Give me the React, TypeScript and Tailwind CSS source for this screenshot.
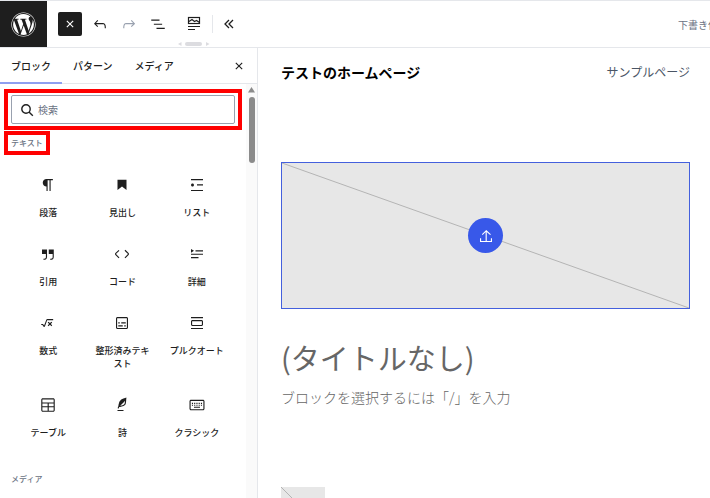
import { useState } from 'react';
import type { ReactNode } from 'react';
import { FaWordpress } from 'react-icons/fa';

const paths = {
  close:
    'M12 13.06l3.712 3.713 1.061-1.06L13.061 12l3.712-3.712-1.06-1.06L12 10.938 8.288 7.227l-1.061 1.06L10.939 12l-3.712 3.712 1.06 1.061L12 13.061z',
  undo: 'M18.3 11.7c-.6-.6-1.4-.9-2.3-.9H6.7l2.9-3.3-1.1-1-4.5 5L8.5 16l1-1-2.7-2.7H16c.5 0 .9.2 1.3.5 1 1 1 3.4 1 4.5v.3h1.5v-.2c0-1.5 0-4.3-1.5-5.7z',
  redo: 'M15.6 6.5l-1.1 1 2.9 3.3H8c-.9 0-1.7.3-2.3.9-1.4 1.5-1.4 4.2-1.4 5.6v.2h1.5v-.3c0-1.1 0-3.5 1-4.5.3-.3.7-.5 1.3-.5h9.2L14.5 15l1.1 1.1 4.6-4.6-4.6-5z',
  listView: 'M3 6h11v1.5H3V6Zm3.5 5.5h11V13h-11v-1.5ZM21 17H10v1.5h11V17Z',
  upload: 'M18.5 15v3.5H13V6.7l4.5 4.1 1-1.1-6.2-5.8-5.8 5.8 1 1.1 4-4v11.7h-6V15H4v5h16v-5z',
  paragraph:
    'm9.99609 14v-.2251l.00391.0001v6.225h1.5v-14.5h2.5v14.5h1.5v-14.5h3v-1.5h-8.50391c-2.76142 0-5 2.23858-5 5 0 2.7614 2.23858 5 5 5z',
  heading: 'M6 5V18.5911L12 13.8473L18 18.5911V5H6Z',
  list: 'M4 4v1.5h16V4H4zm8 8.5h8V11h-8v1.5zM4 20h16v-1.5H4V20zm4-8c0-1.1-.9-2-2-2s-2 .9-2 2 .9 2 2 2 2-.9 2-2z',
  quote:
    'M13 6v6h5.2v4c0 .8-.2 1.4-.5 1.7-.6.6-1.6.6-2.5.5h-.3v1.5h.5c1 0 2.3-.1 3.3-1 .6-.6 1-1.6 1-2.8V6H13zm-9 6h5.2v4c0 .8-.2 1.4-.5 1.7-.6.6-1.6.6-2.5.5h-.3v1.5h.5c1 0 2.3-.1 3.3-1 .6-.6 1-1.6 1-2.8V6H4v6z',
  code: 'M20.8 10.7l-4.3-4.3-1.1 1.1 4.3 4.3c.1.1.1.3 0 .4l-4.3 4.3 1.1 1.1 4.3-4.3c.7-.8.7-1.9 0-2.6zM4.2 11.8l4.3-4.3-1-1-4.3 4.3c-.7.7-.7 1.8 0 2.5l4.3 4.3 1.1-1.1-4.3-4.3c-.2-.1-.2-.3-.1-.4z',
  details: 'M4 16h10v1.5H4V16Zm0-4.5h16V13H4v-1.5ZM10 7h10v1.5H10V7ZM4 5.25l4 2.5-4 2.5v-5Z',
  math: 'M11.2 6.8c-.7 0-1.4.5-1.6 1.1l-2.8 7.5-1.2-1.8c-.1-.2-.4-.3-.6-.3H3v1.5h1.6l1.2 1.8c.6.9 1.9.7 2.2-.3l2.9-7.9s.1-.2.2-.2h7.8V6.7h-7.8Zm5.3 3.4-1.9 1.9-1.9-1.9-1.1 1.1 1.9 1.9-1.9 1.9 1.1 1.1 1.9-1.9 1.9 1.9 1.1-1.1-1.9-1.9 1.9-1.9-1.1-1.1Z',
  preformatted:
    'M18 4H6c-1.1 0-2 .9-2 2v12c0 1.1.9 2 2 2h12c1.1 0 2-.9 2-2V6c0-1.1-.9-2-2-2zm.5 14c0 .3-.2.5-.5.5H6c-.3 0-.5-.2-.5-.5V6c0-.3.2-.5.5-.5h12c.3 0 .5.2.5.5v12zM7 16.5h6V15H7v1.5zm4-4h6V11h-6v1.5zM9 11H7v1.5h2V11zm6 5.5h2V15h-2v1.5z',
  pullquote:
    'M18 8H6c-1.1 0-2 .9-2 2v4c0 1.1.9 2 2 2h12c1.1 0 2-.9 2-2v-4c0-1.1-.9-2-2-2zm.5 6c0 .3-.2.5-.5.5H6c-.3 0-.5-.2-.5-.5v-4c0-.3.2-.5.5-.5h12c.3 0 .5.2.5.5v4zM4 4v1.5h16V4H4zm0 16h16v-1.5H4V20z',
  table:
    'M19 3H5c-1.1 0-2 .9-2 2v14c0 1.1.9 2 2 2h14c1.1 0 2-.9 2-2V5c0-1.1-.9-2-2-2zM5 4.5h14c.3 0 .5.2.5.5v3.5h-15V5c0-.3.2-.5.5-.5zm8 5.5h6.5v3.5H13V10zm-1.5 3.5h-7V10h7v3.5zm-7 5.5v-4h7v4.5H5c-.3 0-.5-.2-.5-.5zm14.5.5h-6V15h6.5v4c0 .3-.2.5-.5.5z',
  verse:
    'M17.8 2l-.9.3c-.1 0-3.6 1-5.2 2.1C10 5.5 9.3 6.5 8.9 7.1c-.6.9-1.7 4.7-1.7 6.3l-.9 2.3c-.2.4 0 .8.4 1 .1 0 .2.1.3.1.3 0 .6-.2.7-.5l.6-1.5c.3 0 .7-.1 1.2-.2.7-.1 1.4-.3 2.2-.5.8-.2 1.6-.5 2.4-.8.7-.3 1.4-.7 1.9-1.2s.8-1.2 1-1.9c.2-.7.3-1.6.4-2.4.1-.8.1-1.7.2-2.5 0-.8.1-1.5.2-2.1V2zm-1.9 5.6c-.1.8-.2 1.5-.3 2.1-.2.6-.4 1-.6 1.3-.3.3-.8.6-1.4.9-.7.3-1.4.5-2.2.8-.6.2-1.3.3-1.8.4L15 7.5c.3-.3.6-.7 1-1.1 0 .4 0 .8-.1 1.2zM6 20h8v-1.5H6V20z',
  classic:
    'M20 5H4c-1.1 0-2 .9-2 2v10c0 1.1.9 2 2 2h16c1.1 0 2-.9 2-2V7c0-1.1-.9-2-2-2zm.5 12c0 .3-.2.5-.5.5H4c-.3 0-.5-.2-.5-.5V7c0-.3.2-.5.5-.5h16c.3 0 .5.2.5.5v10zM5.2 9h1.5v1.5H5.200zm3 0h1.5v1.5H8.200zm3 0h1.5v1.5h-1.500zm3 0h1.500v1.500h-1.500zm3 0h1.500v1.500h-1.500zM5.200 11.500h1.500V13H5.200zm3 0h1.500V13H8.200zm3 0h1.500V13h-1.500zm3 0h1.500V13h-1.500zm3 0h1.500V13h-1.500zM8 14.200h8v1.500H8z',
};

type IconName = keyof typeof paths;

function Icon({ name, className = 'size-[18px]' }: { name: IconName; className?: string }) {
  return (
    <svg viewBox="0 0 24 24" fill="currentColor" className={`shrink-0 ${className}`} aria-hidden="true">
      <path d={paths[name]} />
    </svg>
  );
}

const tabs = ['ブロック', 'パターン', 'メディア'];

const textBlocks: { icon: IconName; label: string }[] = [
  { icon: 'paragraph', label: '段落' },
  { icon: 'heading', label: '見出し' },
  { icon: 'list', label: 'リスト' },
  { icon: 'quote', label: '引用' },
  { icon: 'code', label: 'コード' },
  { icon: 'details', label: '詳細' },
  { icon: 'math', label: '数式' },
  { icon: 'preformatted', label: '整形済みテキスト' },
  { icon: 'pullquote', label: 'プルクオート' },
  { icon: 'table', label: 'テーブル' },
  { icon: 'verse', label: '詩' },
  { icon: 'classic', label: 'クラシック' },
];

function ToolButton({ label, className = '', children }: { label: string; className?: string; children: ReactNode }) {
  return (
    <button aria-label={label} className={`flex size-6 shrink-0 items-center justify-center ${className}`}>
      {children}
    </button>
  );
}

function Header() {
  return (
    <header className="relative flex h-12 shrink-0 items-center border-t border-b border-gray-200 bg-white">
      <a href="#" aria-label="WordPress" className="flex h-full w-[47px] shrink-0 items-center justify-center bg-[#1e1e1e] text-white">
        <FaWordpress className="size-[25px]" />
      </a>
      <div className="ml-[11px] flex items-center">
        <ToolButton label="ブロック挿入ツールを閉じる" className="rounded-xs bg-[#1e1e1e] text-white">
          <Icon name="close" />
        </ToolButton>
        <div className="ml-1.5 flex gap-[5px]">
          <ToolButton label="元に戻す">
            <Icon name="undo" />
          </ToolButton>
          <ToolButton label="やり直す" className="text-gray-400">
            <Icon name="redo" />
          </ToolButton>
          <ToolButton label="リスト表示">
            <Icon name="listView" />
          </ToolButton>
        </div>
        <ToolButton label="テンプレート" className="ml-3">
          <svg viewBox="0 0 18 18" className="size-[18px]" fill="none" stroke="currentColor" strokeWidth="1.2">
            <rect x="3.5" y="2.5" width="11" height="6" />
            <path d="M4 6.500l3-2 2.500 2 2-1 3 2M3 11.500h12M3 14.500h7" />
          </svg>
        </ToolButton>
        <div className="ml-1.5 h-[18px] w-px bg-gray-200" />
        <ToolButton label="ツールバーを隠す" className="ml-1">
          <svg viewBox="0 0 18 18" className="size-[18px]" fill="none" stroke="currentColor" strokeWidth="1.3">
            <path d="M9 5L5 9l4 4M13 5L9 9l4 4" />
          </svg>
        </ToolButton>
      </div>
      <button className="ml-auto w-8 shrink-0 overflow-hidden text-left text-[10px] whitespace-nowrap text-gray-500">下書き保存</button>

      {/* Horizontal scroll hint under the toolbar */}
      <svg viewBox="0 0 32 4" className="absolute bottom-px left-[178px] h-1 w-8" fill="#dcdce0" aria-hidden="true">
        <path d="M3.500 0v4L0 2zM28 0v4l3.500-2z" />
        <rect x="7" width="17" height="4" rx="2" />
      </svg>
    </header>
  );
}

function Sidebar() {
  const [activeTab, setActiveTab] = useState(tabs[0]);
  const [query, setQuery] = useState('');

  return (
    <aside className="flex w-[258px] shrink-0 flex-col border-r border-gray-200">
      <div className="flex h-9 shrink-0 items-center border-b border-gray-200">
        {tabs.map((tab) => (
          <button
            key={tab}
            onClick={() => setActiveTab(tab)}
            className={`-mb-px h-9 border-b-2 px-[11px] text-[10px] font-medium ${
              tab === activeTab ? 'border-[#8e9ff0]' : 'border-transparent'
            }`}
          >
            {tab}
          </button>
        ))}
        <ToolButton label="閉じる" className="mr-1.5 ml-auto">
          <Icon name="close" />
        </ToolButton>
      </div>

      <div className="flex min-h-0 flex-1">
        <div className="min-w-0 flex-1 overflow-hidden pt-[5px] pr-1 pl-1">
          <div className="border-4 border-[#ff0000] px-[3px] py-0.5">
            <label className="flex h-[29px] items-center gap-1 rounded-xs border border-gray-400 pl-2">
              <svg viewBox="0 0 14 14" className="size-3.5 shrink-0" fill="none" stroke="currentColor" strokeWidth="1.4" aria-hidden="true">
                <circle cx="6" cy="6" r="4.2" />
                <path d="M9 9l3.800 3.800" />
              </svg>
              <input
                type="text"
                aria-label="検索"
                placeholder="検索"
                value={query}
                onChange={(e) => setQuery(e.target.value)}
                className="w-full text-[10px] outline-none placeholder:text-gray-500"
              />
            </label>
          </div>
          <h2 className="mt-px w-fit border-4 border-[#ff0000] px-[3px] text-[8px] leading-4 font-medium text-gray-500">テキスト</h2>

          <div className="mt-[9px] mr-2 ml-[7px] grid grid-cols-3">
            {textBlocks
              .filter((block) => block.label.includes(query))
              .map((block) => (
                <button key={block.label} className="flex min-h-[69px] flex-col items-center gap-3 px-2.5 pt-3 pb-3.5">
                  <Icon name={block.icon} />
                  <span className="text-[9px] leading-[13px] font-medium">{block.label}</span>
                </button>
              ))}
          </div>
          <h2 className="mt-[18px] ml-[7px] text-[8px] leading-4 font-medium text-gray-500">メディア</h2>
        </div>

        {/* Scrollbar */}
        <div className="flex w-[11px] shrink-0 flex-col items-center gap-1 bg-[#fafafa] pt-[3px]" aria-hidden="true">
          <svg viewBox="0 0 7 6" className="h-1.5 w-[7px]" fill="#8b8b8b">
            <path d="M3.500 0L7 5.500H0z" />
          </svg>
          <div className="h-[66px] w-1.5 rounded-full bg-[#8b8b8b]" />
        </div>
      </div>
    </aside>
  );
}

function Canvas() {
  return (
    <main className="min-w-0 flex-1 overflow-hidden pr-5 pl-[23px]">
      <div className="flex h-12 items-center justify-between">
        <p className="text-sm font-bold text-black">テストのホームページ</p>
        <a href="#" className="text-xs text-gray-600">
          サンプルページ
        </a>
      </div>

      <div className="relative mt-[66px] flex h-[147px] items-center justify-center border border-[#4460dd] bg-[#e7e7e7]">
        <svg viewBox="0 0 100 100" preserveAspectRatio="none" className="absolute inset-0 size-full" stroke="#b4b4b4" aria-hidden="true">
          <path d="M0 0L100 100" vectorEffect="non-scaling-stroke" />
        </svg>
        <button aria-label="アイキャッチ画像を追加" className="relative flex size-[35px] items-center justify-center rounded-full bg-[#3858e9] text-white">
          <Icon name="upload" />
        </button>
      </div>

      <h1 className="mt-7 text-[29px] leading-10 font-normal text-[#666]">(タイトルなし)</h1>
      <p className="mt-2.5 text-sm font-light text-[#666]">ブロックを選択するには「/」を入力</p>

      <svg viewBox="0 0 44 44" className="mt-20 size-11 bg-[#e7e7e7]" stroke="#b4b4b4" aria-hidden="true">
        <path d="M0 0l44 44" />
      </svg>
    </main>
  );
}

export default function App() {
  return (
    <div className="flex h-screen flex-col overflow-hidden bg-white font-['Noto_Sans_CJK_JP',sans-serif] text-[#1e1e1e]">
      <Header />
      <div className="flex min-h-0 flex-1">
        <Sidebar />
        <Canvas />
      </div>
    </div>
  );
}
